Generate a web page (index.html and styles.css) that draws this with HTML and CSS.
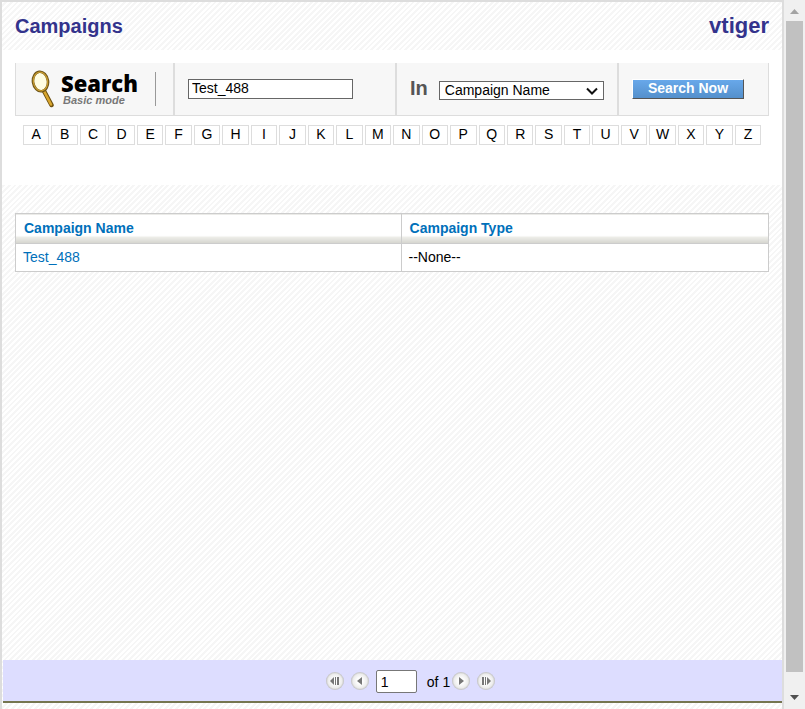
FILE: index.html
```html
<!DOCTYPE html>
<html lang="en">
<head>
<meta charset="utf-8">
<title>Campaigns</title>
<link rel="stylesheet" href="styles.css">
</head>
<body>
<div class="window">
  <div class="page">
    <header class="header">
      <h1 class="title">Campaigns</h1>
      <span class="brand">vtiger</span>
    </header>
    <section class="search">
      <form class="search-bar">
        <div class="cell logo-cell">
          <div class="logo">
            <svg class="lens" width="24" height="38" viewBox="0 0 24 38" aria-hidden="true">
              <path d="M13 21 L20.500 35" stroke="#6d5010" stroke-width="4.500" stroke-linecap="round"/>
              <path d="M13 21 L20 34.500" stroke="#d9a62e" stroke-width="2.600" stroke-linecap="round"/>
              <ellipse cx="9.500" cy="11.500" rx="7.500" ry="9.800" fill="#fffde2" stroke="#6d5518" stroke-width="2.600" transform="rotate(-8 9.500 11.500)"/>
              <ellipse cx="9.500" cy="11.500" rx="7.100" ry="9.400" fill="none" stroke="#c79b30" stroke-width="1.300" transform="rotate(-8 9.500 11.500)"/>
            </svg>
            <div class="logo-text">
              <span class="logo-name">Search</span>
              <span class="logo-mode">Basic mode</span>
            </div>
          </div>
        </div>
        <div class="cell">
          <input class="query" type="text" value="Test_488" aria-label="Search text">
        </div>
        <div class="cell field">
          <label class="in" for="field">In</label>
          <div class="select-box">
            <select class="field-list" id="field"><option>Campaign Name</option><option>Campaign Type</option></select>
            <svg class="chevron" width="12" height="8" viewBox="0 0 12 8" aria-hidden="true"><path d="M1 1.500L6 6.500L11 1.500" fill="none" stroke="#111" stroke-width="2"/></svg>
          </div>
        </div>
        <div class="cell">
          <button class="submit" type="button">Search Now</button>
        </div>
      </form>
      <nav class="letters" aria-label="Filter by letter">
        <a href="#">A</a><a href="#">B</a><a href="#">C</a><a href="#">D</a><a href="#">E</a><a href="#">F</a><a href="#">G</a><a href="#">H</a><a href="#">I</a><a href="#">J</a><a href="#">K</a><a href="#">L</a><a href="#">M</a><a href="#">N</a><a href="#">O</a><a href="#">P</a><a href="#">Q</a><a href="#">R</a><a href="#">S</a><a href="#">T</a><a href="#">U</a><a href="#">V</a><a href="#">W</a><a href="#">X</a><a href="#">Y</a><a href="#">Z</a>
      </nav>
    </section>
    <main class="results">
      <table class="list">
        <colgroup><col class="col-name"><col></colgroup>
        <thead><tr><th>Campaign Name</th><th>Campaign Type</th></tr></thead>
        <tbody><tr><td><a href="#">Test_488</a></td><td>--None--</td></tr></tbody>
      </table>
    </main>
    <footer class="pager">
      <button class="step" type="button" aria-label="First page"><svg width="18" height="18" viewBox="0 0 18 18"><path d="M8 5v8L4 9zM9 5h1v8H9zM11 5h2v8h-2z"/></svg></button>
      <button class="step" type="button" aria-label="Previous page"><svg width="18" height="18" viewBox="0 0 18 18"><path d="M11 5v8L6 9z"/></svg></button>
      <input class="page-number" type="text" value="1" aria-label="Page">
      <span class="total">of 1</span>
      <button class="step" type="button" aria-label="Next page"><svg width="18" height="18" viewBox="0 0 18 18"><path d="M7 5v8l5-4z"/></svg></button>
      <button class="step" type="button" aria-label="Last page"><svg width="18" height="18" viewBox="0 0 18 18"><path d="M10 5v8l4-4zM5 5h2v8H5zM8 5h1v8H8z"/></svg></button>
    </footer>
  </div>
  <div class="scrollbar" aria-hidden="true">
    <svg width="9" height="5" viewBox="0 0 9 5"><path fill="#a3a3a3" d="M0 5L4.500 0L9 5z"/></svg>
    <div class="thumb"></div>
    <svg width="9" height="5" viewBox="0 0 9 5"><path fill="#505050" d="M0 0L4.500 5L9 0z"/></svg>
  </div>
</div>
</body>
</html>
```

FILE: styles.css
```css
* { box-sizing: border-box; }

body {
  margin: 0;
  font: 14px/16px "Liberation Sans", Arial, sans-serif;
  color: #000;
}

input, select, button { font: inherit; color: inherit; }
a { text-decoration: none; }

.window {
  display: flex;
  height: 100vh;
}

.page {
  flex: 1;
  display: flex;
  flex-direction: column;
  border: 2px solid #ddd;
  border-bottom: 0;
  padding-bottom: 6px;
  background: repeating-linear-gradient(135deg, #fff 0 2px, #f6f6f6 2px 4px);
}

.header {
  display: flex;
  align-items: center;
  justify-content: space-between;
  height: 48px;
  padding: 0 13px;
  color: #33338c;
  font-weight: bold;
}

.title { margin: 0; font-size: 20px; line-height: 24px; }
.brand { font-size: 22px; line-height: 24px; }

.search {
  height: 135px;
  padding: 13px 13px 0;
  background: #fff;
}

.search-bar {
  display: grid;
  grid-template-columns: 159fr 222fr 222fr 149fr;
  height: 53px;
  border: 1px solid #ddd;
  border-top: 0;
  background: #f7f7f7;
}

.cell {
  display: flex;
  align-items: center;
  min-width: 0;
  padding: 0 13px;
  border-right: 2px solid #ddd;
}
.cell:last-child { border-right: 0; }

.logo-cell { padding: 0 17px 0 15px; }
.logo {
  flex: 1;
  display: flex;
  align-items: center;
  gap: 6px;
  height: 34px;
  border-right: 1px solid #999;
}
.logo-text { display: flex; flex-direction: column; }
.lens { flex: none; }
.logo-name { font: 800 22px/22px "Open Sans", sans-serif; }
.logo-mode {
  padding-left: 2px;
  color: #777;
  font: italic bold 11px/12px "Liberation Sans", Arial, sans-serif;
  white-space: nowrap;
}

.query {
  width: 165px;
  height: 20px;
  padding: 0 3px 2px;
  border: 1px solid #666;
  background: #fff;
}

.field { gap: 11px; }
.in { color: #555; font-size: 20px; font-weight: bold; line-height: 24px; padding-bottom: 2px; }
.select-box { position: relative; margin-top: 2px; }
.field-list {
  display: block;
  width: 165px;
  height: 19px;
  padding: 0 5px 1px;
  border: 1px solid #666;
  border-radius: 0;
  background: #fff;
  appearance: none;
}
.chevron {
  position: absolute;
  top: 6px;
  right: 6px;
  pointer-events: none;
}

.submit {
  width: 112px;
  height: 20px;
  padding: 0 0 2px;
  border: 1px solid;
  border-color: #fff #555 #555 #fff;
  background: linear-gradient(#68a8ea, #5490cc);
  color: #fff;
  font-weight: bold;
}

.letters {
  display: flex;
  gap: 2px;
  padding: 9px 8px 0;
}
.letters a {
  flex: 1 1 0;
  height: 20px;
  border: 1px solid #ddd;
  color: #000;
  line-height: 16px;
  text-align: center;
}

.results { flex: 1; padding: 28px 13px; }

.list {
  width: 100%;
  table-layout: fixed;
  border-collapse: collapse;
}
.col-name { width: 51.2%; }
.list th, .list td {
  padding: 0 7px 2px;
  border: 1px solid #ccc;
  text-align: left;
}
.list th {
  height: 30px;
  padding-left: 8px;
  background: linear-gradient(#fff 0 74%, #f0f0eb 76%, #d4d4ce);
  color: #0070ba;
}
.list td { height: 28px; background: #fff; }
.list td a { color: #0070ba; }

.pager {
  display: flex;
  align-items: center;
  justify-content: center;
  height: 43px;
  margin-left: 1px;
  padding-left: 36px;
  border-bottom: 2px solid #757550;
  background: #ddf;
}
.step {
  display: flex;
  width: 18px;
  height: 18px;
  padding: 0;
  margin-right: 7px;
  border: 0;
  border-radius: 50%;
  background: radial-gradient(circle, #fff 20%, #ececec 55%, #bbb 72%);
}
.step:last-child { margin-right: 0; }
.step path { fill: #777; }
.page-number {
  width: 41px;
  height: 23px;
  margin-top: 2px;
  padding: 0 4px;
  border: 1px solid #777;
  border-radius: 2px;
}
.total { margin: 2px 2px 0 10px; }

.scrollbar {
  display: flex;
  flex-direction: column;
  align-items: center;
  width: 21px;
  padding: 9px 2px;
  background: #f0f0f0;
}
.thumb {
  flex: 1;
  width: 17px;
  margin: 7px 0 23px;
  background: #c1c1c1;
}
```
